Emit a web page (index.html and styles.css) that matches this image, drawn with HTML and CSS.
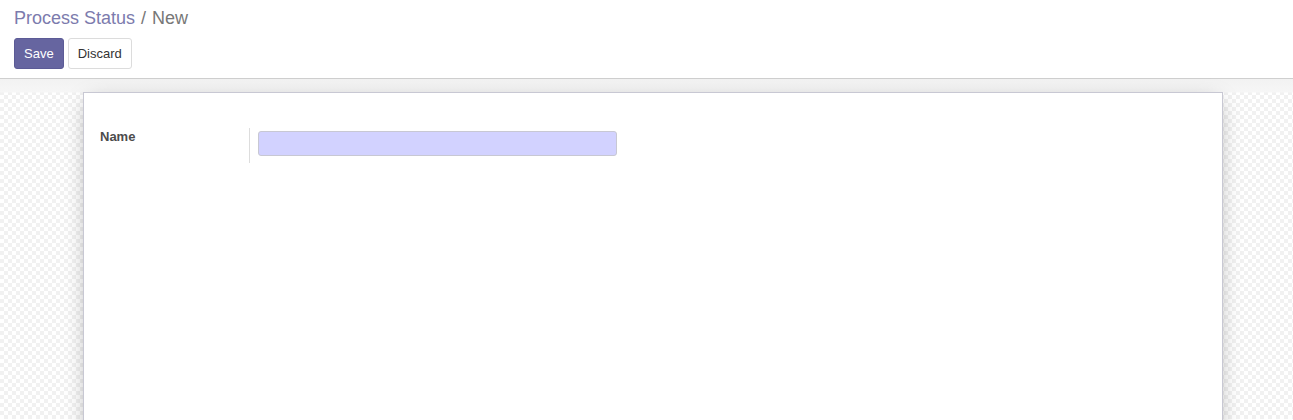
FILE: index.html
```html
<!DOCTYPE html>
<html>
<head>
<meta charset="utf-8">
<link rel="stylesheet" href="styles.css">
</head>
<body>
<div class="control-panel">
  <ol class="breadcrumb">
    <li class="crumb-link">Process Status</li>
    <li class="crumb-sep">/</li>
    <li class="crumb-active">New</li>
  </ol>
  <div class="buttons">
    <button class="btn btn-primary">Save</button>
    <button class="btn btn-default">Discard</button>
  </div>
</div>
<div class="form-view">
  <div class="sheet">
    <div class="field-row">
      <label class="field-label">Name</label>
      <div class="field-cell">
        <input class="field-input" type="text">
      </div>
    </div>
  </div>
</div>
</body>
</html>
```
FILE: styles.css
```css
html, body {
  margin: 0;
  padding: 0;
  height: 100%;
  overflow: hidden;
}
body {
  font-family: "Liberation Sans", Arial, sans-serif;
  font-size: 13px;
  color: #4c4c4c;
  background: #fff;
}
.control-panel {
  height: 79px;
  box-sizing: border-box;
  padding: 5px 14px 0 14px;
  border-bottom: 1px solid #cfcfcf;
  background: #fff;
}
.breadcrumb {
  list-style: none;
  margin: 0;
  padding: 0;
  display: flex;
  font-size: 18px;
  line-height: 26px;
  height: 26px;
}
.crumb-link { color: #7c7bad; }
.crumb-sep { color: #777; padding: 0 6px; }
.crumb-active { color: #777; }
.buttons {
  display: flex;
  gap: 4px;
  margin-top: 7px;
}
.btn {
  font-family: "Liberation Sans", Arial, sans-serif;
  font-size: 13px;
  line-height: 17px;
  padding: 6px 9px;
  border-radius: 3px;
  border: 1px solid transparent;
  cursor: pointer;
  margin: 0;
}
.btn-primary {
  background: #6665a0;
  border-color: #5c5b96;
  color: #fff;
}
.btn-default {
  background: #fff;
  border-color: #dcdcdc;
  color: #333;
}
.form-view {
  height: calc(100% - 80px);
  box-sizing: border-box;
  padding: 13px 70px 0 83px;
  background-color: #fff;
  background-image:
    linear-gradient(to bottom, #f2f2f2 0px, #f6f6f6 13px, rgba(255,255,255,0) 14px),
    conic-gradient(#f1f1f1 25%, #fff 0 50%, #f1f1f1 0 75%, #fff 0);
  background-size: 100% 100%, 8px 8px;
  background-repeat: no-repeat, repeat;
}
.sheet {
  width: 1140px;
  height: 380px;
  box-sizing: border-box;
  background: #fff;
  border: 1px solid #c8c8d3;
  box-shadow: 0 5px 20px -5px rgba(0, 0, 0, 0.35);
  padding: 35px 16px 0 16px;
}
.field-row {
  display: flex;
  align-items: flex-start;
}
.field-label {
  width: 149px;
  font-weight: bold;
  padding-top: 1px;
  color: #4c4c4c;
  line-height: 15px;
}
.field-cell {
  border-left: 1px solid #ddd;
  padding: 3px 0 7px 8px;
}
.field-input {
  display: block;
  width: 359px;
  height: 25px;
  box-sizing: border-box;
  margin: 0;
  background: #d2d2ff;
  border: 1px solid #c8c8d3;
  border-radius: 3px;
  padding: 0 4px;
}
```
